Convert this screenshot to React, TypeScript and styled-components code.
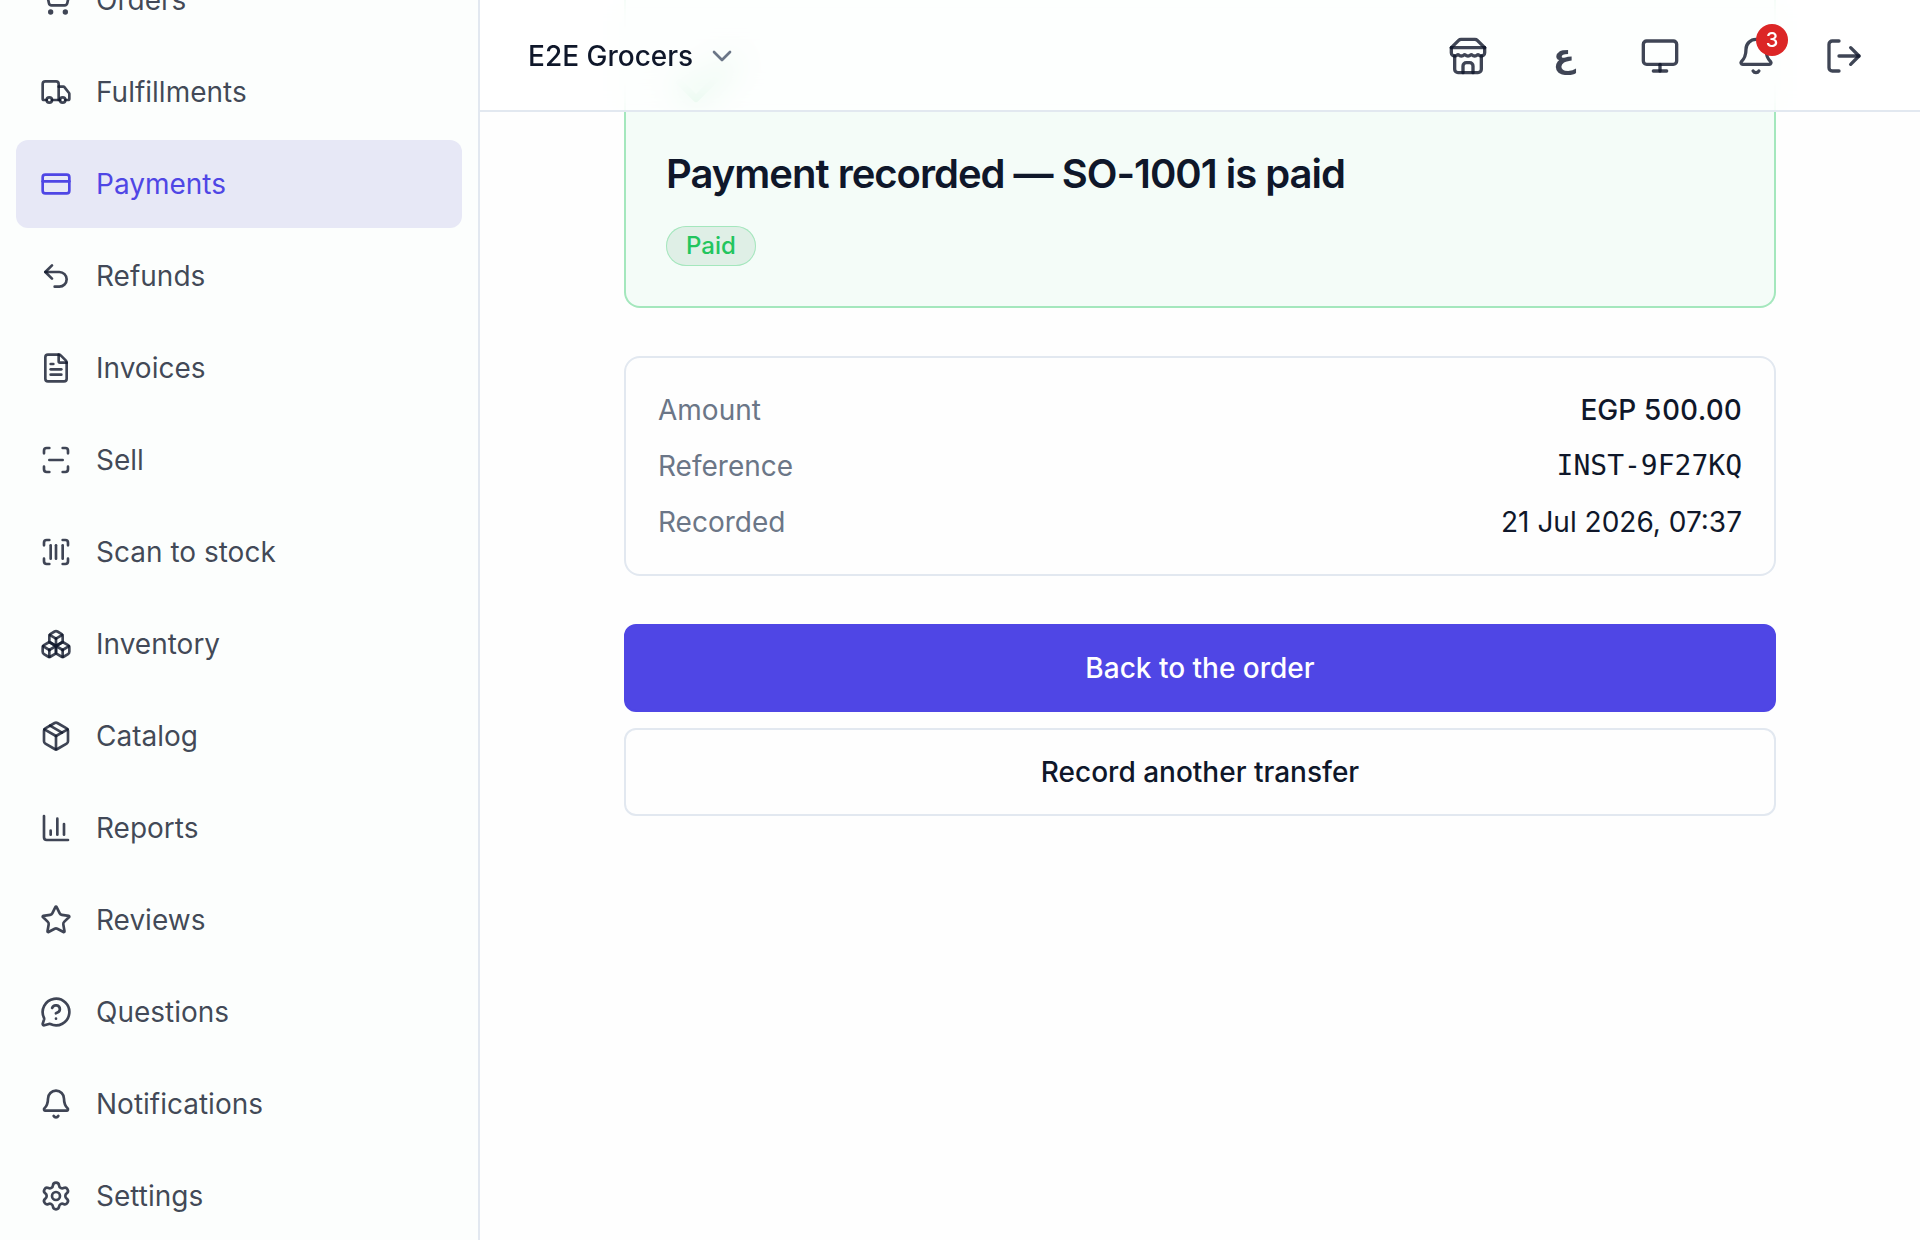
import React from "react";
import styled, { createGlobalStyle } from "styled-components";
import {
  Bell,
  Boxes,
  Check,
  ChevronDown,
  CreditCard,
  FileText,
  LogOut,
  MessageCircleQuestionMark,
  Monitor,
  Package,
  ScanBarcode,
  ScanLine,
  Settings,
  ShoppingCart,
  Star,
  Truck,
  Undo2,
} from "lucide-react";

const color = {
  ink: "#0f172a",
  soft: "rgba(15, 23, 42, 0.8)",
  muted: "#6b7687",
  line: "#e2e8f0",
  primary: "#4f46e5",
  success: "#22c55e",
  danger: "#dc2626",
  sidebar: "#fcfefd",
  page: "#fefefe",
};

const GlobalStyle = createGlobalStyle`
  *, *::before, *::after { box-sizing: border-box; }
  body {
    margin: 0;
    background: ${color.page};
    color: ${color.ink};
    font-family: Inter, "DejaVu Sans", sans-serif;
    font-size: 28px;
    line-height: 40px;
    -webkit-font-smoothing: antialiased;
  }
  button, select { font: inherit; color: inherit; }
`;

const Shell = styled.div`
  display: grid;
  grid-template-columns: 480px minmax(0, 1fr);
  min-height: 100vh;
`;

const Sidebar = styled.aside`
  display: flex;
  flex-direction: column;
  justify-content: flex-end;
  height: 100vh;
  overflow: hidden;
  padding: 0 16px;
  background: ${color.sidebar};
  border-right: 2px solid ${color.line};
`;

const NavList = styled.nav`
  display: flex;
  flex-direction: column;
  gap: 4px;
`;

const NavItem = styled.a<{ $active?: boolean }>`
  display: flex;
  flex: none;
  align-items: center;
  gap: 24px;
  height: 88px;
  padding: 0 24px;
  border-radius: 12px;
  text-decoration: none;
  color: ${(p) => (p.$active ? color.primary : color.soft)};
  background: ${(p) => (p.$active ? "#e7e8f6" : "transparent")};

  svg {
    flex: none;
    width: 32px;
    height: 32px;
  }
`;

const Stage = styled.div`
  display: grid;
  grid-template-columns: minmax(0, 1fr);
  align-items: start;
`;

const Header = styled.header`
  grid-area: 1 / 1;
  z-index: 1;
  display: flex;
  align-items: center;
  justify-content: space-between;
  height: 112px;
  padding: 0 32px;
  background: rgba(255, 255, 255, 0.8);
  backdrop-filter: blur(16px);
  box-shadow: inset 0 -2px 0 ${color.line};
`;

const StorePicker = styled.label`
  display: flex;
  align-items: center;
  gap: 12px;
  padding: 0 16px;

  svg {
    width: 32px;
    height: 32px;
    color: ${color.muted};
    pointer-events: none;
  }
`;

const StoreSelect = styled.select`
  appearance: none;
  margin: 0;
  padding: 0;
  border: 0;
  background: transparent;
  font-weight: 500;
`;

const Actions = styled.div`
  display: flex;
  align-items: center;
`;

const ActionGroup = styled.div`
  display: flex;
  gap: 8px;
`;

const IconButton = styled.button`
  position: relative;
  display: flex;
  align-items: center;
  justify-content: center;
  width: 88px;
  height: 88px;
  padding: 0;
  border: 0;
  border-radius: 12px;
  background: transparent;
  color: ${color.soft};

  svg {
    width: 40px;
    height: 40px;
  }
`;

const LanguageButton = styled(IconButton)`
  font-family: "DejaVu Sans", sans-serif;
  font-size: 32px;
  font-weight: 700;
`;

const CountBadge = styled.span`
  position: absolute;
  top: 12px;
  right: 12px;
  width: 32px;
  height: 32px;
  border-radius: 16px;
  background: ${color.danger};
  color: #fff;
  font-size: 20px;
  line-height: 32px;
  font-weight: 500;
  text-align: center;
`;

const Main = styled.main`
  grid-area: 1 / 1;
  display: flex;
  flex-direction: column;
  gap: 48px;
  width: 100%;
  max-width: 1152px;
  margin: 0 auto;
`;

const SuccessCard = styled.section`
  display: flex;
  flex-direction: column;
  align-items: flex-start;
  gap: 24px;
  padding: 42px 40px 40px;
  border: 2px solid #a4e7bd;
  border-top: 0;
  border-radius: 0 0 16px 16px;
  background: #f4fcf8;

  svg {
    width: 80px;
    height: 80px;
    color: ${color.success};
  }
`;

const Title = styled.h1`
  margin: 0;
  font-size: 40px;
  line-height: 56px;
  font-weight: 600;
  letter-spacing: -0.025em;
`;

const StatusPill = styled.span`
  padding: 4px 20px;
  border-radius: 20px;
  background: #dfefe6;
  box-shadow: inset 0 0 0 1px #a4e7bd;
  color: ${color.success};
  font-size: 24px;
  line-height: 32px;
  font-weight: 500;
`;

const Details = styled.dl`
  display: flex;
  flex-direction: column;
  gap: 16px;
  margin: 0;
  padding: 32px;
  border: 2px solid ${color.line};
  border-radius: 16px;
`;

const DetailRow = styled.div`
  display: flex;
  justify-content: space-between;
`;

const Term = styled.dt`
  color: ${color.muted};
`;

const Value = styled.dd<{ $kind?: "strong" | "mono" }>`
  margin: 0;
  font-weight: ${(p) => (p.$kind === "strong" ? 500 : 400)};
  font-family: ${(p) => (p.$kind === "mono" ? '"DejaVu Sans Mono", monospace' : "inherit")};
  font-variant-numeric: ${(p) => (p.$kind === "strong" ? "tabular-nums" : "normal")};
`;

const ButtonStack = styled.div`
  display: flex;
  flex-direction: column;
  gap: 16px;
`;

const WideButton = styled.button<{ $primary?: boolean }>`
  height: 88px;
  border: 2px solid ${(p) => (p.$primary ? color.primary : color.line)};
  border-radius: 12px;
  background: ${(p) => (p.$primary ? color.primary : "transparent")};
  color: ${(p) => (p.$primary ? "#fff" : color.ink)};
  font-weight: 500;
`;

/* Storefront with a scalloped awning */
const StoreIcon = () => (
  <svg
    viewBox="0 0 24 24"
    fill="none"
    stroke="currentColor"
    strokeWidth={2}
    strokeLinecap="round"
    strokeLinejoin="round"
    aria-hidden="true"
  >
    <path d="m2 7 4.41-4.41A2 2 0 0 1 7.83 2h8.34a2 2 0 0 1 1.42.59L22 7" />
    <path d="M4 12v8a2 2 0 0 0 2 2h12a2 2 0 0 0 2-2v-8" />
    <path d="M15 22v-4a2 2 0 0 0-2-2h-2a2 2 0 0 0-2 2v4" />
    <path d="M2 7h20" />
    <path d="M22 7v3a2 2 0 0 1-2 2a2.7 2.7 0 0 1-1.59-.63.7.7 0 0 0-.82 0A2.7 2.7 0 0 1 16 12a2.7 2.7 0 0 1-1.59-.63.7.7 0 0 0-.82 0A2.7 2.7 0 0 1 12 12a2.7 2.7 0 0 1-1.59-.63.7.7 0 0 0-.82 0A2.7 2.7 0 0 1 8 12a2.7 2.7 0 0 1-1.59-.63.7.7 0 0 0-.82 0A2.7 2.7 0 0 1 4 12a2 2 0 0 1-2-2V7" />
  </svg>
);

/* Chart with axes and three separate bars */
const ReportsIcon = () => (
  <svg
    viewBox="0 0 24 24"
    fill="none"
    stroke="currentColor"
    strokeWidth={2}
    strokeLinecap="round"
    strokeLinejoin="round"
    aria-hidden="true"
  >
    <path d="M3 3v16a2 2 0 0 0 2 2h16" />
    <path d="M18 17V9" />
    <path d="M13 17V5" />
    <path d="M8 17v-3" />
  </svg>
);

const navItems: { label: string; Icon: React.ElementType }[] = [
  { label: "Orders", Icon: ShoppingCart },
  { label: "Fulfillments", Icon: Truck },
  { label: "Payments", Icon: CreditCard },
  { label: "Refunds", Icon: Undo2 },
  { label: "Invoices", Icon: FileText },
  { label: "Sell", Icon: ScanLine },
  { label: "Scan to stock", Icon: ScanBarcode },
  { label: "Inventory", Icon: Boxes },
  { label: "Catalog", Icon: Package },
  { label: "Reports", Icon: ReportsIcon },
  { label: "Reviews", Icon: Star },
  { label: "Questions", Icon: MessageCircleQuestionMark },
  { label: "Notifications", Icon: Bell },
  { label: "Settings", Icon: Settings },
];

export default function App() {
  return (
    <>
      <GlobalStyle />
      <Shell>
        <Sidebar>
          <NavList aria-label="Main">
            {navItems.map(({ label, Icon }) => (
              <NavItem
                key={label}
                href="#"
                $active={label === "Payments"}
                aria-current={label === "Payments" ? "page" : undefined}
              >
                <Icon />
                {label}
              </NavItem>
            ))}
          </NavList>
        </Sidebar>

        <Stage>
          <Header>
            <StorePicker>
              <StoreSelect aria-label="Store">
                <option>E2E Grocers</option>
              </StoreSelect>
              <ChevronDown />
            </StorePicker>
            <Actions>
              <ActionGroup>
                <IconButton aria-label="View storefront">
                  <StoreIcon />
                </IconButton>
                <LanguageButton lang="ar">ع</LanguageButton>
                <IconButton aria-label="Theme">
                  <Monitor />
                </IconButton>
                <IconButton aria-label="Notifications">
                  <Bell />
                  <CountBadge>3</CountBadge>
                </IconButton>
              </ActionGroup>
              <IconButton aria-label="Sign out">
                <LogOut />
              </IconButton>
            </Actions>
          </Header>

          <Main>
            <SuccessCard>
              <Check />
              <Title>Payment recorded — SO-1001 is paid</Title>
              <StatusPill>Paid</StatusPill>
            </SuccessCard>

            <Details>
              <DetailRow>
                <Term>Amount</Term>
                <Value $kind="strong">EGP 500.00</Value>
              </DetailRow>
              <DetailRow>
                <Term>Reference</Term>
                <Value $kind="mono">INST-9F27KQ</Value>
              </DetailRow>
              <DetailRow>
                <Term>Recorded</Term>
                <Value>21 Jul 2026, 07:37</Value>
              </DetailRow>
            </Details>

            <ButtonStack>
              <WideButton $primary>Back to the order</WideButton>
              <WideButton>Record another transfer</WideButton>
            </ButtonStack>
          </Main>
        </Stage>
      </Shell>
    </>
  );
}
